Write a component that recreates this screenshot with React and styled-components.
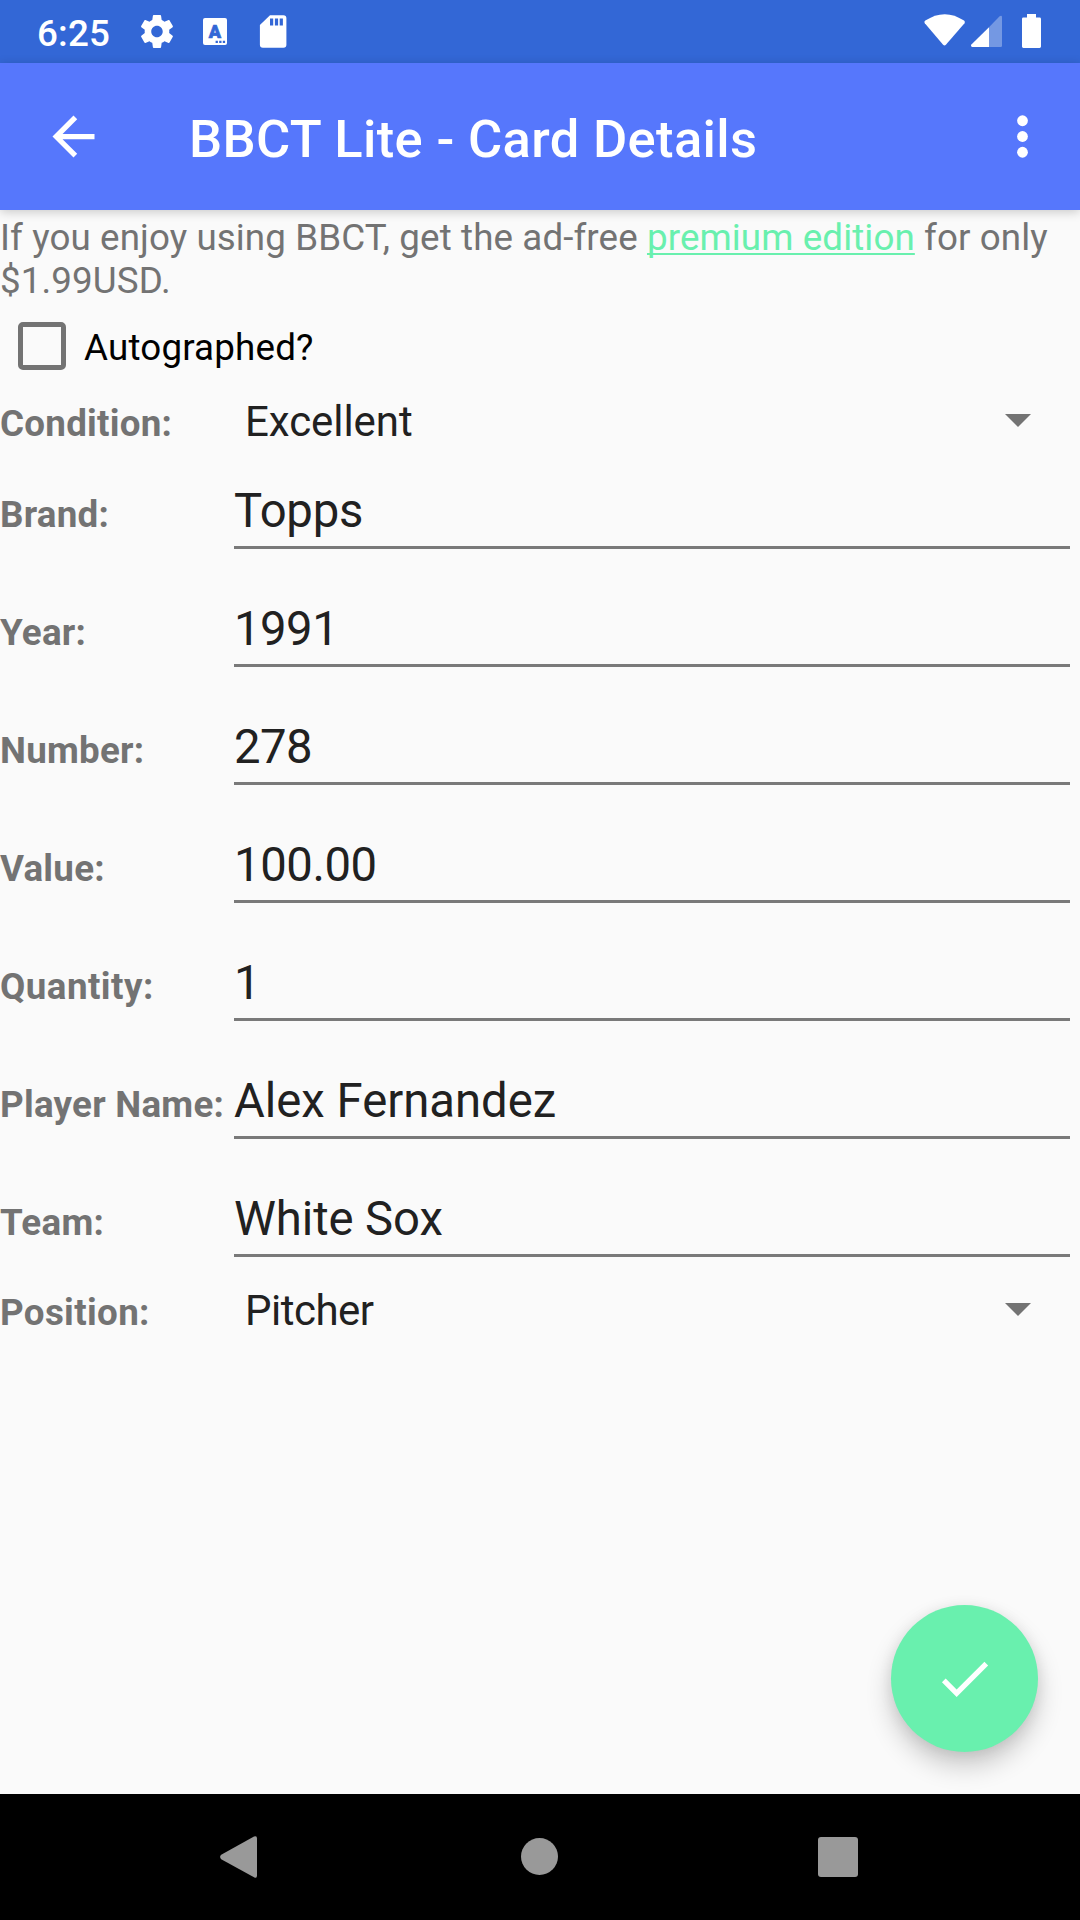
import React from "react";
import styled, { createGlobalStyle } from "styled-components";

const GlobalStyle = createGlobalStyle`
  * { box-sizing: border-box; }
  body { margin: 0; background: #fafafa; }
`;

const Screen = styled.div`
  position: relative;
  display: flex;
  flex-direction: column;
  width: 1080px;
  height: 1920px;
  overflow: hidden;
  background: #fafafa;
  font-family: Roboto, "Liberation Sans", sans-serif;
  font-size: 36.75px;
  line-height: 43px;
  color: #737373;
`;

const StatusBar = styled.div`
  display: flex;
  justify-content: space-between;
  height: 63px;
  padding: 0 37px;
  background: #3367d6;
  color: #fff;
`;

const StatusGroup = styled.div`
  display: flex;
  align-items: flex-start;
`;

const Clock = styled.span`
  width: 100px;
  padding-top: 12px;
  font-weight: 500;
  letter-spacing: 0.15px;
`;

const Icon = styled.svg`
  display: block;
  flex: none;
`;

const AppBar = styled.header`
  position: relative;
  z-index: 1;
  display: flex;
  align-items: center;
  flex: none;
  height: 147px;
  padding: 0 26px 0 42px;
  background: #5677fc;
  color: #fff;
  box-shadow: 0 2px 10px rgba(0, 0, 0, 0.2);
`;

const Title = styled.h1`
  flex: 1;
  margin: 0;
  padding: 4px 0 0 84px;
  font-size: 52.5px;
  line-height: 62px;
  font-weight: 500;
  letter-spacing: 0.34px;
`;

const Content = styled.main`
  flex: 1;
  padding-top: 6px;
`;

const Notice = styled.p`
  margin: 0;
  letter-spacing: 0.1px;
`;

const Link = styled.a`
  color: #69f0ae;
  text-decoration: underline;
  text-decoration-thickness: 2px;
  text-underline-offset: 3px;
  text-decoration-skip-ink: none;
`;

const CheckRow = styled.label`
  display: flex;
  align-items: flex-start;
  height: 75px;
  margin-top: 20px;
  padding-left: 18px;
  color: #000;
`;

const CheckBox = styled.span`
  width: 48px;
  height: 48px;
  margin-right: 18px;
  border: 5px solid #737373;
  border-radius: 5px;
`;

const CheckText = styled.span`
  padding-top: 4px;
  letter-spacing: 0.18px;
`;

const Row = styled.div`
  display: flex;
  align-items: baseline;
  height: ${(p) => p.$height || 118}px;
  padding-right: 10px;
`;

const Label = styled.span`
  width: 234px;
  font-weight: 700;
  letter-spacing: ${(p) => p.$tracking ?? 0.25}px;
  white-space: nowrap;
`;

const Field = styled.span`
  flex: 1;
  height: 65px;
  border-bottom: 3px solid #797979;
  font-size: 47.25px;
  line-height: 55px;
  letter-spacing: ${(p) => p.$tracking}px;
  color: #212121;
`;

const Select = styled.span`
  display: flex;
  flex: 1;
  justify-content: space-between;
  align-items: center;
  padding: 0 39.5px 0 11px;
  font-size: 42px;
  line-height: 49px;
  letter-spacing: ${(p) => p.$tracking}px;
  color: #212121;
`;

const Caret = styled.svg`
  display: block;
  flex: none;
  margin-bottom: 2px;
`;

const Fab = styled.button`
  position: absolute;
  right: 42px;
  bottom: 168px;
  display: flex;
  align-items: center;
  justify-content: center;
  width: 147px;
  height: 147px;
  padding: 0;
  border: 0;
  border-radius: 50%;
  background: #69f0ae;
  box-shadow: 0 14px 26px rgba(0, 0, 0, 0.2), 0 2px 14px rgba(0, 0, 0, 0.08);
`;

const NavBar = styled.nav`
  display: flex;
  align-items: center;
  gap: 260px;
  height: 126px;
  padding: 0 0 1px 220px;
  background: #000;
`;

const GEAR =
  "M19.43 12.98c.04-.32.07-.64.07-.98s-.03-.66-.07-.98l2.11-1.65c.19-.15.24-.42.12-.64l-2-3.46c-.12-.22-.39-.3-.61-.22l-2.49 1c-.52-.4-1.08-.73-1.69-.98l-.38-2.65C14.46 2.18 14.25 2 14 2h-4c-.25 0-.46.18-.49.42l-.38 2.65c-.61.25-1.17.59-1.69.98l-2.49-1c-.23-.09-.49 0-.61.22l-2 3.46c-.13.22-.07.49.12.64l2.11 1.65c-.04.32-.07.65-.07.98s.03.66.07.98l-2.11 1.65c-.19.15-.24.42-.12.64l2 3.46c.12.22.39.3.61.22l2.49-1c.52.4 1.08.73 1.69.98l.38 2.65c.03.24.24.42.49.42h4c.25 0 .46-.18.49-.42l.38-2.65c.61-.25 1.17-.59 1.69-.98l2.49 1c.23.09.49 0 .61-.22l2-3.46c.12-.22.07-.49-.12-.64l-2.11-1.65zM12 15.5c-1.93 0-3.5-1.57-3.5-3.5s1.57-3.5 3.5-3.5 3.5 1.57 3.5 3.5-1.57 3.5-3.5 3.5z";

function StatusIcons() {
  return (
    <Icon width="160" height="63" viewBox="137 0 160 63" fill="#fff">
      <path d={GEAR} transform="translate(137.3 11.8) scale(1.64)" />
      <rect x="203" y="18" width="24" height="27" rx="2" />
      <text
        x="215"
        y="37.6"
        textAnchor="middle"
        fontFamily="Roboto"
        fontWeight="900"
        fontSize="18"
        letterSpacing="0"
        fill="#3367d6"
        stroke="#3367d6"
        strokeWidth="0.7"
      >
        A
      </text>
      <path d="M215.6 40.8h2.3v2.2h-2.3zM219.2 40.8h2.3v2.2h-2.3zM222.8 40.8h2.3v2.2h-2.3z" fill="#3367d6" />
      <path
        fillRule="evenodd"
        d="M270 15.2h13.4a3 3 0 0 1 3 3v26.6a3 3 0 0 1-3 3h-20.5a3 3 0 0 1-3-3V25.1zM270 18.6v6.8h3.2v-6.8zM274.9 18.6v6.8h3.2v-6.8zM279.7 18.6v6.8h3.2v-6.8z"
      />
    </Icon>
  );
}

function SystemIcons() {
  return (
    <Icon width="119" height="63" viewBox="924 0 119 63" fill="#fff">
      <path d="M924.8 23.2Q923.8 21.7 925.3 20.6C938 12 951.5 12 964 20.6Q965.4 21.7 964.5 23.2L945.9 44.7Q944.5 46.2 943.1 44.7Z" />
      <path d="M989 27.2L999.6 16.3Q1002 15 1002 17.3V45.7Q1002 47 1000.7 47H989z" opacity=".32" />
      <path d="M989 27.2V47H972.2Q970.2 46.6 971.4 44.6z" />
      <path d="M1027 14h9v3.5h3.6q1.4 0 1.4 1.4v27.7q0 1.4-1.4 1.4h-16.2q-1.4 0-1.4-1.4V18.9q0-1.4 1.4-1.4h3.6z" />
    </Icon>
  );
}

function SelectField({ tracking, children }) {
  return (
    <Select $tracking={tracking}>
      {children}
      <Caret width="26" height="13" viewBox="0 0 26 13" fill="#737373">
        <path d="M0 0h26L13 13z" />
      </Caret>
    </Select>
  );
}

const FIELDS = [
  { label: "Brand:", value: "Topps", tracking: -0.25 },
  { label: "Year:", value: "1991", tracking: -0.5 },
  { label: "Number:", value: "278", tracking: -0.5 },
  { label: "Value:", value: "100.00", tracking: -0.42 },
  { label: "Quantity:", labelTracking: 0.45, value: "1", tracking: 0 },
  { label: "Player Name:", value: "Alex Fernandez", tracking: 0 },
  { label: "Team:", value: "White Sox", tracking: -0.1, height: 94 },
];

export default function App() {
  return (
    <Screen>
      <GlobalStyle />
      <StatusBar>
        <StatusGroup>
          <Clock>6:25</Clock>
          <StatusIcons />
        </StatusGroup>
        <SystemIcons />
      </StatusBar>
      <AppBar>
        <Icon width="63" height="63" viewBox="0 0 24 24" fill="#fff">
          <path d="M20 11H7.83l5.59-5.59L12 4l-8 8 8 8 1.41-1.41L7.83 13H20v-2z" />
        </Icon>
        <Title>BBCT Lite - Card Details</Title>
        <Icon width="63" height="63" viewBox="0 0 24 24" fill="#fff">
          <circle cx="12" cy="6" r="2.05" />
          <circle cx="12" cy="12" r="2.05" />
          <circle cx="12" cy="18" r="2.05" />
        </Icon>
      </AppBar>
      <Content>
        <Notice>
          If you enjoy using BBCT, get the ad-free <Link>premium edition</Link> for only $1.99USD.
        </Notice>
        <CheckRow>
          <CheckBox />
          <CheckText>Autographed?</CheckText>
        </CheckRow>
        <Row $height={87}>
          <Label>Condition:</Label>
          <SelectField tracking={-0.06}>Excellent</SelectField>
        </Row>
        {FIELDS.map(({ label, labelTracking, value, tracking, height }) => (
          <Row key={label} $height={height}>
            <Label $tracking={labelTracking}>{label}</Label>
            <Field $tracking={tracking}>{value}</Field>
          </Row>
        ))}
        <Row $height={87}>
          <Label $tracking={0.35}>Position:</Label>
          <SelectField tracking={-0.5}>Pitcher</SelectField>
        </Row>
      </Content>
      <Fab aria-label="Save">
        <Icon width="63" height="63" viewBox="0 0 24 24" fill="#fff">
          <path d="M9 16.17L4.83 12l-1.42 1.41L9 19 21 7l-1.41-1.41z" />
        </Icon>
      </Fab>
      <NavBar>
        <Icon width="41" height="42" viewBox="0 0 41 42" fill="#999">
          <path d="M34 .5Q37-.8 37 2.5V39.5Q37 42.8 34 41.2L1.2 23.2Q-1 21 1.2 18.8z" />
        </Icon>
        <Icon width="37" height="37" viewBox="0 0 37 37" fill="#999">
          <circle cx="18.5" cy="18.5" r="18.5" />
        </Icon>
        <Icon width="40" height="40" viewBox="0 0 40 40" fill="#999">
          <rect width="40" height="40" rx="3" />
        </Icon>
      </NavBar>
    </Screen>
  );
}
